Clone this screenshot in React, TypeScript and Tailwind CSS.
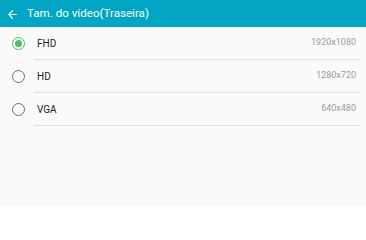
import { ArrowLeft } from "lucide-react";

const options = [
  { label: "FHD", res: "1920x1080", selected: true },
  { label: "HD", res: "1280x720", selected: false },
  { label: "VGA", res: "640x480", selected: false },
];

export default function App() {
  return (
    <div className="w-[366px] h-[206px] bg-[#fafafa] font-['Roboto',sans-serif] overflow-hidden">
      <div className="h-[27px] bg-[#00a6c4] flex items-center pl-[6px] text-white">
        <ArrowLeft size={13} strokeWidth={2.2} className="text-white/90 mt-[1px]" />
        <span className="ml-[8px] text-[11.6px] leading-none mt-[1px]">Tam. do vídeo(Traseira)</span>
      </div>

      <div>
        {options.map((o) => (
          <div key={o.label} className="flex items-center h-[33px]">
            <div className="w-[34px] flex justify-center pl-[2px]">
              {o.selected ? (
                <div className="w-[13px] h-[13px] rounded-full border-[1.5px] border-[#4cc05a] flex items-center justify-center">
                  <div className="w-[7px] h-[7px] rounded-full bg-[#4cc05a]" />
                </div>
              ) : (
                <div className="w-[13px] h-[13px] rounded-full border-[1.2px] border-[#707070]" />
              )}
            </div>
            <div className="flex-1 h-full mr-[6px] border-b border-[#e0e0e0] flex items-center justify-between pl-[3px] pr-[4px]">
              <span className="text-[10px] text-[#222]">{o.label}</span>
              <span className="text-[9px] text-[#9a9a9a]">{o.res}</span>
            </div>
          </div>
        ))}
      </div>
    </div>
  );
}
